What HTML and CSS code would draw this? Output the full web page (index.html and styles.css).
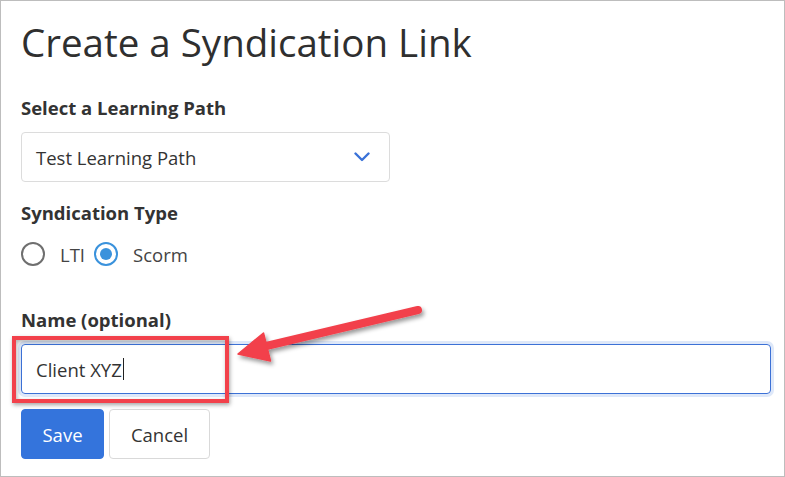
FILE: index.html
```html
<!DOCTYPE html>
<html lang="en">
<head>
<meta charset="utf-8">
<title>Create a Syndication Link</title>
<link rel="stylesheet" href="styles.css">
</head>
<body>
<div class="frame">
  <h1 class="title">Create a Syndication Link</h1>

  <div class="field">
    <div class="label">Select a Learning Path</div>
    <div class="select">
      <span>Test Learning Path</span>
      <svg class="chevron" width="16" height="10" viewBox="0 0 16 10"><path d="M1.5 1.5 L8 8 L14.5 1.5" fill="none" stroke="#3a72d8" stroke-width="2.4" stroke-linecap="round" stroke-linejoin="round"/></svg>
    </div>
  </div>

  <div class="field type-field">
    <div class="label">Syndication Type</div>
    <div class="radios">
      <div class="radio"><span class="circle"></span><span class="radio-text">LTI</span></div>
      <div class="radio"><span class="circle checked"></span><span class="radio-text">Scorm</span></div>
    </div>
  </div>

  <div class="field name-field">
    <div class="label">Name (optional)</div>
    <div class="input"><span>Client XYZ</span><span class="caret"></span></div>
  </div>

  <div class="actions">
    <button class="btn btn-primary">Save</button>
    <button class="btn btn-default">Cancel</button>
  </div>

  <div class="highlight"></div>
  <svg class="arrow" width="785" height="477" viewBox="0 0 785 477">
    <defs>
      <filter id="shadow" x="-20%" y="-50%" width="140%" height="200%">
        <feDropShadow dx="2" dy="3" stdDeviation="2" flood-color="#000" flood-opacity="0.4"/>
      </filter>
    </defs>
    <g filter="url(#shadow)" fill="#f2414b" stroke="#f2414b">
      <line x1="418" y1="310" x2="262" y2="347" stroke-width="8" stroke-linecap="round"/>
      <polygon points="238,354 263.5,333 270.5,361" stroke-width="1.5" stroke-linejoin="round"/>
    </g>
  </svg>
</div>
</body>
</html>
```

FILE: styles.css
```css
* { box-sizing: border-box; }
html, body { margin: 0; padding: 0; background: #fff; }
body {
  font-family: "Open Sans", "Noto Sans", sans-serif;
  color: #333;
}
.frame {
  position: relative;
  width: 785px;
  height: 477px;
  border: 1px solid #bdbdbd;
  padding: 18px 13px 0 20px;
  overflow: hidden;
}
.title {
  margin: 0;
  font-size: 38.5px;
  line-height: 46px;
  font-weight: 400;
  color: #2f2f2f;
}
.field { margin-top: 29px; }
.label {
  font-size: 18.5px;
  font-weight: 700;
  line-height: 27px;
  color: #333;
  margin-bottom: 11px;
}
.select {
  width: 369px;
  height: 50px;
  border: 1px solid #dcdcdc;
  border-radius: 4px;
  display: flex;
  align-items: center;
  justify-content: space-between;
  padding: 0 19px 0 14px;
  font-size: 18.5px;
  color: #333;
}
.chevron { display: block; }
.type-field { margin-top: 17px; }
.type-field .label { margin-bottom: 13px; }
.radios {
  display: flex;
  align-items: center;
  height: 30px;
}
.radio {
  display: flex;
  align-items: center;
  font-size: 18.5px;
  color: #444;
  margin-right: 9px;
}
.circle {
  width: 24px;
  height: 24px;
  border: 2px solid #6f6f6f;
  border-radius: 50%;
  margin-right: 15px;
  display: flex;
  align-items: center;
  justify-content: center;
}
.circle.checked { border-color: #3a92dc; }
.circle.checked::after {
  content: "";
  width: 12px;
  height: 12px;
  border-radius: 50%;
  background: #3a92dc;
}
.name-field { margin-top: 37px; }
.input {
  height: 50px;
  border: 1px solid #3c71d6;
  border-radius: 4px;
  box-shadow: 0 0 0 3px rgba(70, 125, 220, 0.18);
  display: flex;
  align-items: center;
  padding: 0 14px;
  font-size: 18.5px;
  color: #333;
}
.caret {
  display: inline-block;
  width: 1px;
  height: 22px;
  background: #222;
  margin-left: 1px;
}
.actions {
  display: flex;
  gap: 5px;
  margin-top: 15px;
}
.btn {
  height: 50px;
  border-radius: 4px;
  font-family: inherit;
  font-size: 18.5px;
  padding: 0;
}
.btn-primary {
  width: 83px;
  background: #3474dc;
  border: 1px solid #3474dc;
  color: #fff;
}
.btn-default {
  width: 101px;
  background: #fff;
  border: 1px solid #d9d9d9;
  color: #333;
}
.highlight {
  position: absolute;
  left: 11px;
  top: 335px;
  width: 217px;
  height: 67px;
  border: 4px solid #f2414b;
  box-shadow: 1px 2px 4px rgba(0, 0, 0, 0.35), inset 1px 2px 4px rgba(0, 0, 0, 0.3);
}
.arrow {
  position: absolute;
  left: -1px;
  top: -1px;
  pointer-events: none;
}
```
